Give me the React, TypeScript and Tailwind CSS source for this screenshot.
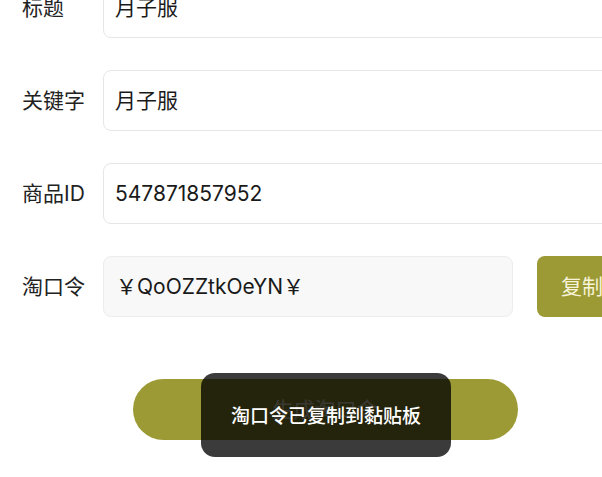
const font = { fontFamily: '"Inter", "Noto Sans CJK SC", sans-serif' };

type Row = { label: string; value: string; disabled?: boolean };

const rows: Row[] = [
  { label: "标题", value: "月子服" },
  { label: "关键字", value: "月子服" },
  { label: "商品ID", value: "547871857952" },
];

const FormRow = ({ label, value, disabled }: Row) => (
  <div className="flex items-center">
    <div className="w-[81px] shrink-0 text-[21px] text-[#222]">{label}</div>
    <div
      className={`flex-1 h-[61px] flex items-center px-[11px] rounded-[8px] border border-[#e6e6e6] text-[21px] text-[#1a1a1a] ${
        disabled ? "bg-[#f7f7f7]" : "bg-white"
      }`}
    >
      {value}
    </div>
  </div>
);

export default function App() {
  return (
    <div className="w-[602px] h-[477px] overflow-hidden bg-white" style={font}>
      <div className="relative w-[650px] mt-[-23px] pl-[22px] pr-[22px] flex flex-col gap-[32px]">
        {rows.map((r) => (
          <FormRow key={r.label} {...r} />
        ))}
        <div className="flex items-center">
          <div className="w-[81px] shrink-0 text-[21px] text-[#222]">淘口令</div>
          <div className="w-[410px] h-[61px] flex items-center px-[12px] rounded-[8px] border border-[#ececec] bg-[#f8f8f8] text-[21px] text-[#1a1a1a]">
            ￥QoOZZtkOeYN￥
          </div>
          <button className="ml-[24px] flex-1 h-[61px] rounded-[8px] bg-[#9c9a34] text-[21px] text-[#f6f3d8] text-left pl-[24px]">
            复制
          </button>
        </div>

        <div className="flex justify-center pt-[30px]">
          <button className="w-[385px] h-[61px] rounded-full bg-[#9c9a34] text-[21px] text-[#f6f3d8]">
            生成淘口令
          </button>
        </div>

        {/* toast over the generate button */}
        <div className="absolute left-[201px] top-[396px] w-[250px] h-[84px] rounded-[14px] bg-[rgba(0,0,0,0.77)] flex items-center justify-center pt-[4px] text-[19px] font-medium text-white">
          淘口令已复制到黏贴板
        </div>
      </div>
    </div>
  );
}
